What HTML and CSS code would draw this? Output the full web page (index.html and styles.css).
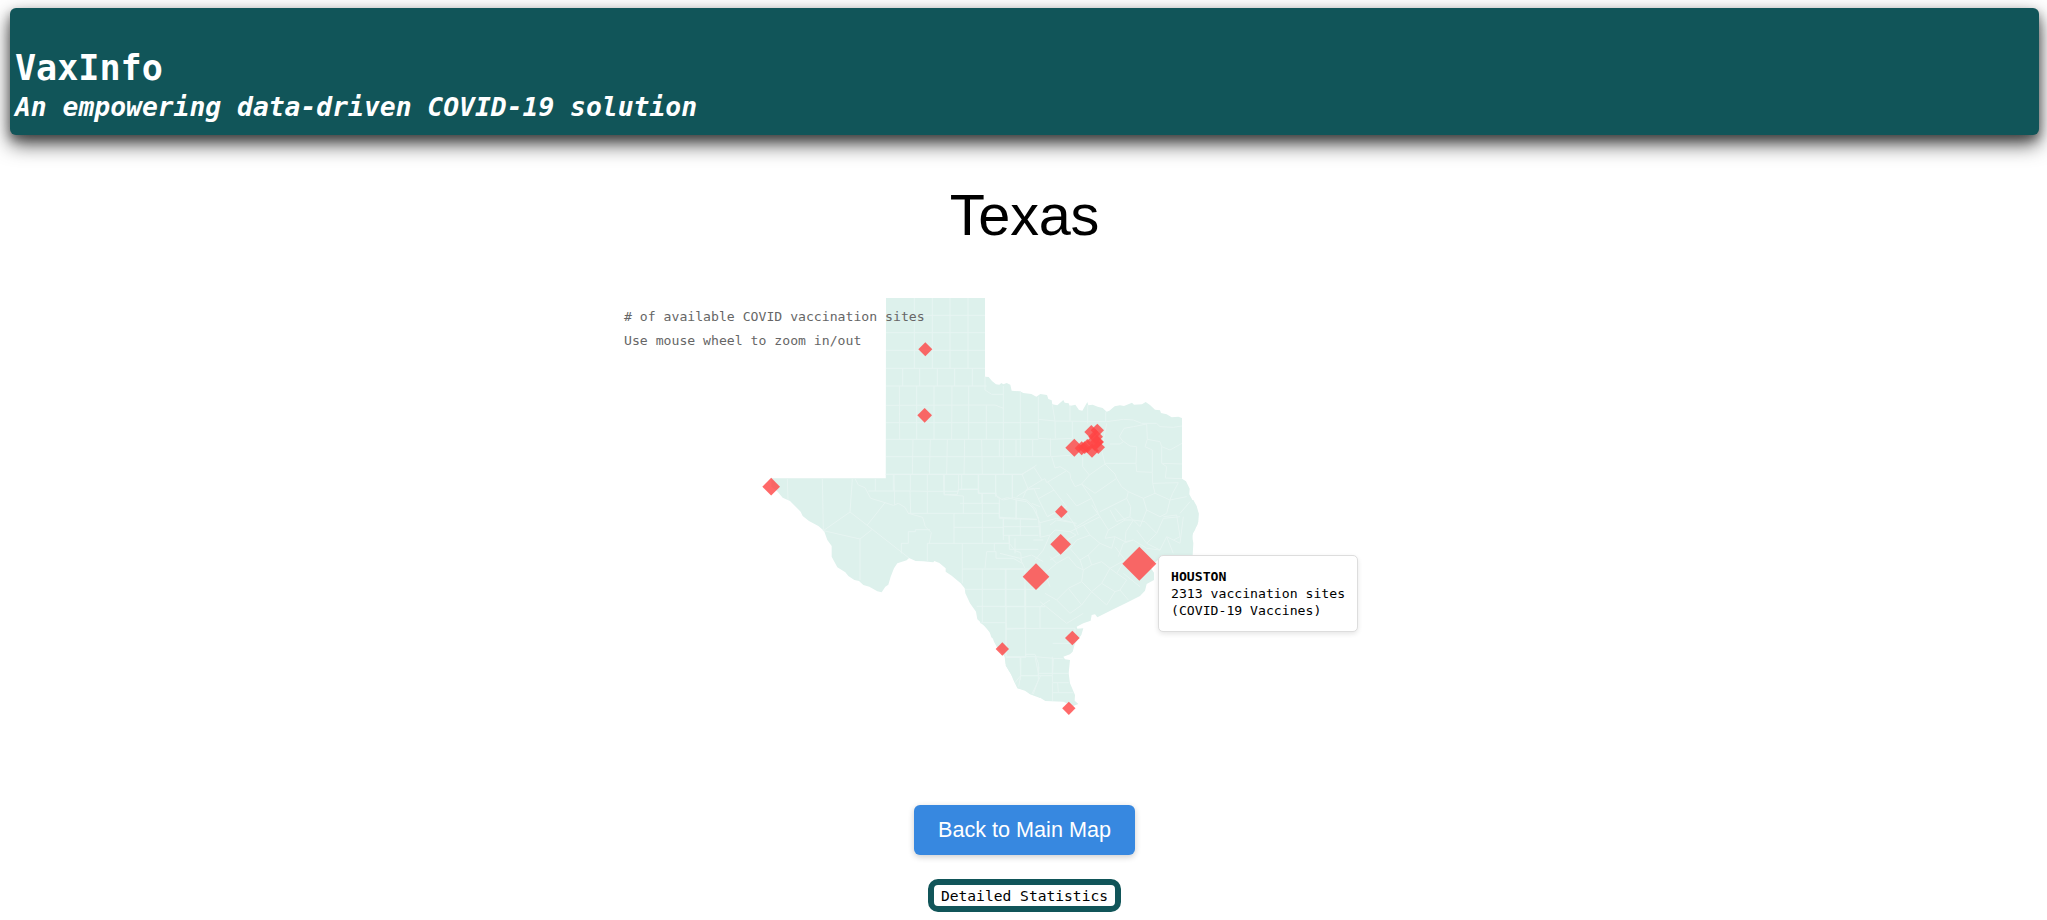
FILE: index.html
```html
<!DOCTYPE html>
<html lang="en">
<head>
<meta charset="utf-8">
<title>VaxInfo</title>
<link rel="stylesheet" href="styles.css">
</head>
<body>
<header class="banner">
  <h1 class="brand">VaxInfo</h1>
  <h2 class="tagline">An empowering data-driven COVID-19 solution</h2>
</header>
<main class="page">
  <div class="state-name">Texas</div>
  <div class="map">
    <svg class="map-svg" viewBox="-1068 0 2523 1440" aria-label="Texas vaccination sites">
      <!-- state shape, drawn in three overlapping parts -->
      <g class="land">
        <path d="M-222 54H75V290L86 291 96 303 108 313 118 314 124 309 130 313 140 309 151 314 155 332 180 334 190 339 214 342 229 350 241 342 261 345 265 357 275 361 277 373 292 376 310 360 314 368 326 370 329 378 346 374 357 390 367 392 382 366 385 376 398 374 413 380 428 384 440 395 448 392 464 379 480 376 492 378 516 368 522 374 546 373 557 366 570 375 585 389 600 391 603 399 620 403 635 412 655 410 666 414V596L678 604 689 626 688 643 700 665 705 683 716 700 714 722 712 735 700 752 696 780H-223Z"/>
        <g transform="translate(-660 540)"><path d="M94 55H438L460 0H900V714L870 703 855 692 832 685 820 660 812 640 797 617 798 590 770 545 754 532 748 513 720 485 712 478 708 455 690 430 676 400 674 385 662 370 635 347 617 335 617 325 598 309 583 303 580 307 550 304 527 303 507 294 500 301 472 310 462 325 452 350 445 374 436 380 425 397 412 394 388 380 370 375 357 363 343 360 325 348 316 337 292 322 275 290 275 258 262 240 252 212 235 198 207 183 188 168 182 155 150 123 128 113 113 95 94 80Z"/></g>
        <g transform="translate(60 660)"><path d="M0 0H640L650 18 656 40 655 65 645 90 636 105 640 130 638 165 610 190 540 175 510 200 522 218 522 240 500 252 495 272 480 288 440 308 400 328 352 352 345 343 335 345 332 362 310 370 290 380 292 386 310 385 304 405 285 430 278 455 270 463 250 470 255 478 270 480 266 520 270 550 285 585 284 602 295 612 280 618 250 605 196 603 172 588 155 584 135 570 113 565 100 535 85 510 76 490 74 470 50 440 42 425 35 405 12 375 0 368Z"/></g>
      </g>
      <g class="county">
        <!-- panhandle and plains -->
        <path transform="translate(-1080 0)" d="M943 54V265M997 54V265M1050 54V265M1104 54V265M858 106H1155M858 158H1155M858 211H1155M858 265H1155M908 265V318M959 265V318M1012 265V318M1064 265V318M1117 265V318M858 318H1160M898 318 899 478M950 318V478M1002 318V478M1056 318 1055 478M1106 318V478M1159 376V478M858 376 1185 375 1210 385M858 428H1315M858 478H1315M939 478 937 583M991 478 988 583M1042 478 1040 583M1094 478 1092 583M1145 478 1147 583M1198 478V530M858 530H1350M857 583H1265M880 583V632M931 583V632M982 583V632M1033 583V646M1085 583V628M1136 583V640M1155 290V330L1175 343H1210"/>
        <!-- north and east -->
        <path d="M130 318V583M181 334V530M235 350V475M277 373 285 423 286 475M330 375V423M337 425V475M383 375V430M437 395V425M235 418 286 423 383 424 440 425 490 418 520 420 545 430 590 430 600 440 640 442 666 438M235 475 275 478 337 475M218 480V530M271 475 272 530 330 526M168 480V530M55 583V640M107 583V650M157 583V655M0 628 55 628 57 640 107 640 112 652 130 660 160 653 200 660 212 672 228 688 232 710 240 730 242 770M185 583 222 562 246 600 200 628 188 655M246 600 255 596 260 608 320 572 300 560 285 564 275 530M200 628 222 626 235 656 282 630 262 605M235 656 262 710 320 680 282 630M320 572 330 580 332 595 345 620 365 612 395 655 350 678 320 640M262 710 300 690 320 700 340 728 350 740 415 700 395 655M365 612 388 585 368 560V530M388 585 435 552 465 582 470 595 405 640 365 612M435 552 425 510 440 430M435 550H528L530 575 577 577M470 595 485 620 505 635 500 655 420 695M485 480 510 498 530 500 528 550M450 492H480L490 485 478 470 492 445 520 440 560 432 562 478 600 485 605 500 630 510 666 490M562 478 555 500 577 510V577L578 610 655 608M605 500V550L666 552M605 550 620 560 616 594 666 596M578 610 585 640 630 660 638 640 655 608M505 635 550 655 585 640M500 655 512 680 510 710 470 725 450 690M550 655 560 690 600 710 620 700 630 660M510 710 540 740 560 690M610 710 650 705 660 770 640 780M630 660 680 650M660 700 690 665M0 670H66V640M66 670H118V712L230 718M118 712H130V780M168 655V718M130 740H240M240 728 290 715 340 728 355 765"/>
        <!-- trans-pecos and edwards plateau -->
        <path transform="translate(-660 540)" d="M142 56 144 120M247 56 250 212M337 56 330 156 250 212 360 237V360M330 156 397 208 360 237M397 208 507 294M382 195 435 128M345 56 355 75 375 83 392 115 435 128 460 136 475 130 495 142 505 160 548 172 556 200 574 218 568 250M385 93H510L512 160M406 56V93M462 45 464 136M438 43H850M510 93 562 94V160M562 94H655L656 43M505 160H778M610 45 612 104 652 103 655 88H715V43M612 104 670 108V160M668 88H715V100H770M727 100V250M642 160V250M642 202H790M562 250H808L806 226M484 280V250H505V215H526V209H570M562 250V304M667 250V370M763 250V272M740 275H768V295H820L850 312M740 275 735 325M667 327H850M796 327V440M727 327V488M675 388H900M710 439H857M720 488H798L800 508 857 505M857 388V592M798 592H857V583H885L895 610V647H842V592M842 647 825 668M895 660 880 702M767 43V105L785 118 802 113 830 120 860 125 880 145 895 175M778 118V175H790V226H895M830 120 828 178M841 178V226M790 176 890 178M808 226V268H895M817 43V112M846 43 890 15M846 43 865 88 900 85M865 88 830 110M763 250H808L825 272 842 278 845 305"/>
        <!-- central, hill country and gulf coast -->
        <path transform="translate(120 480)" d="M115 230 120 292 150 285 165 270 210 275 228 285 200 300M150 255 170 240 230 250M150 285 130 330 105 360M130 300H100M0 340 60 355 95 345 130 365M60 355 75 385M45 295V340M210 275 250 255 300 230 275 195M250 255 270 285 230 300 210 325 150 360M300 230 325 270 375 240 345 205M325 270 315 295 345 290 375 305 378 275 400 240 375 240M270 285 300 310 335 325 345 290M300 310 265 345 240 360 210 325M265 345 275 375 250 390 240 360M275 375 305 365 330 385 375 360 345 320M400 240 435 245 470 280 440 310 410 270M440 310 480 330 500 290 540 310 550 230M470 280 490 235 540 230M480 330 440 325 400 300 375 305M500 290 520 340M375 360 350 400 330 385M350 400 380 420 360 450 385 480M330 385 305 430 345 455 360 450M305 430 275 455 320 495 345 455M275 455 245 425 250 390M245 425 205 445 245 495 275 455M205 445 170 480 210 520 245 495M170 480 135 460M120 485 200 550 250 520M150 480 120 500V565H225M225 565V610H200M18 387V440M0 387H100M75 387V500M75 440V565L120 566M18 440V500M0 500H135M18 500V650M75 565 20 565M18 650H60L62 720M60 650H105L115 700V720M105 650 160 655 158 700H115M158 610H205M160 655 190 656M158 700H205M400 300 370 310 355 350M370 400 420 440M120 200 95 190M150 350 170 370 205 350 230 380 250 390M170 370 135 400 150 440"/>
        <path transform="translate(60 660)" d="M122 470V527L116 560M175 527H217L218 548H266M217 470V527M78 472H122M122 527H175L177 500M182 527 155 584M217 548 218 603M233 548 235 578H280M218 578H235M78 320V470"/>
      </g>
      <defs><path id="site" d="M0-1 1 0 0 1-1 0Z"/></defs>
      <g class="sites">
        <use href="#site" transform="translate(-104 208) scale(21)"/>
        <use href="#site" transform="translate(-106 406) scale(22)"/>
        <use href="#site" transform="translate(-566.5 620) scale(26.5)"/>
        <use href="#site" transform="translate(127 1107) scale(20)"/>
        <use href="#site" transform="translate(228 890) scale(40)"/>
        <use href="#site" transform="translate(302 793) scale(31)"/>
        <use href="#site" transform="translate(304 695) scale(19)"/>
        <use href="#site" transform="translate(538 851.5) scale(51)"/>
        <use href="#site" transform="translate(337 1074) scale(22)"/>
        <use href="#site" transform="translate(326.5 1285) scale(20)"/>
        <use href="#site" transform="translate(343 503) scale(27)"/>
        <use href="#site" transform="translate(394 456) scale(21)"/>
        <use href="#site" transform="translate(412 451) scale(20)"/>
        <use href="#site" transform="translate(365 505) scale(21)"/>
        <use href="#site" transform="translate(374 503) scale(19)"/>
        <use href="#site" transform="translate(382 498) scale(21)"/>
        <use href="#site" transform="translate(396 512) scale(21)"/>
        <use href="#site" transform="translate(415 502) scale(20)"/>
        <use href="#site" transform="translate(404 486) scale(26)"/>
        <use href="#site" transform="translate(407 470) scale(22)"/>
        <use href="#site" transform="translate(411 486) scale(21)"/>
      </g>
    </svg>
    <div class="map-note">
      <div># of available COVID vaccination sites</div>
      <div>Use mouse wheel to zoom in/out</div>
    </div>
    <div class="tooltip"><b>HOUSTON</b><br>2313 vaccination sites<br>(COVID-19 Vaccines)</div>
  </div>
  <button class="back" type="button">Back to Main Map</button>
  <button class="stats" type="button">Detailed Statistics</button>
</main>
</body>
</html>
```
FILE: styles.css
```css
body {
  margin: 0;
  padding: 8px 8px 0 10px;
  background: #fff;
  color: #000;
  font-family: "DejaVu Sans Mono", monospace;
}
.banner {
  box-sizing: border-box;
  height: 127px;
  padding: 37px 5px 0;
  border-radius: 6px;
  background: #115559;
  color: #fff;
  box-shadow: 0 5px 10px rgba(0, 0, 0, .3), 0 9px 20px rgba(0, 0, 0, .7);
}
.brand, .tagline { margin: 0; font-weight: bold; }
.brand { font-size: 35.1px; line-height: 45px; }
.tagline { font-size: 26.35px; line-height: 35px; font-style: italic; }
.page { display: flex; flex-direction: column; align-items: center; }
.state-name {
  margin-top: 47px;
  font: 57.6px/66px "Liberation Sans", Arial, sans-serif;
  letter-spacing: -.2px;
}
.map { position: relative; width: 841px; height: 480px; margin-top: 32px; }
.map-svg { display: block; width: 841px; height: 480px; }
.land { fill: #ddf1ec; }
.county { fill: none; stroke: #e7f5f2; stroke-width: 3; }
.sites { fill: #f44; fill-opacity: .8; }
.map-note {
  position: absolute;
  left: 20px;
  top: 25px;
  color: #666;
  font-size: 13.15px;
  line-height: 24px;
  white-space: nowrap;
}
.tooltip {
  position: absolute;
  left: 554px;
  top: 275px;
  box-sizing: border-box;
  width: 200px;
  height: 77px;
  padding: 12px;
  border: 1px solid #ddd;
  border-radius: 5px;
  background: #fff;
  box-shadow: 0 2px 5px rgba(0, 0, 0, .1);
  font-size: 13.15px;
  line-height: 17px;
  white-space: nowrap;
}
.back {
  width: 221px;
  height: 50px;
  margin-top: 45px;
  padding: 0;
  border: 0;
  border-radius: 6px;
  background: #3788e0;
  color: #fff;
  font: 21.6px "Liberation Sans", Arial, sans-serif;
  box-shadow: 0 2px 6px rgba(0, 0, 0, .2);
}
.stats {
  width: 193px;
  height: 33px;
  margin-top: 24px;
  padding: 0;
  border: 6px solid #115559;
  border-radius: 10px;
  background: #fff;
  color: #000;
  font: 14.61px "DejaVu Sans Mono", monospace;
}
```
